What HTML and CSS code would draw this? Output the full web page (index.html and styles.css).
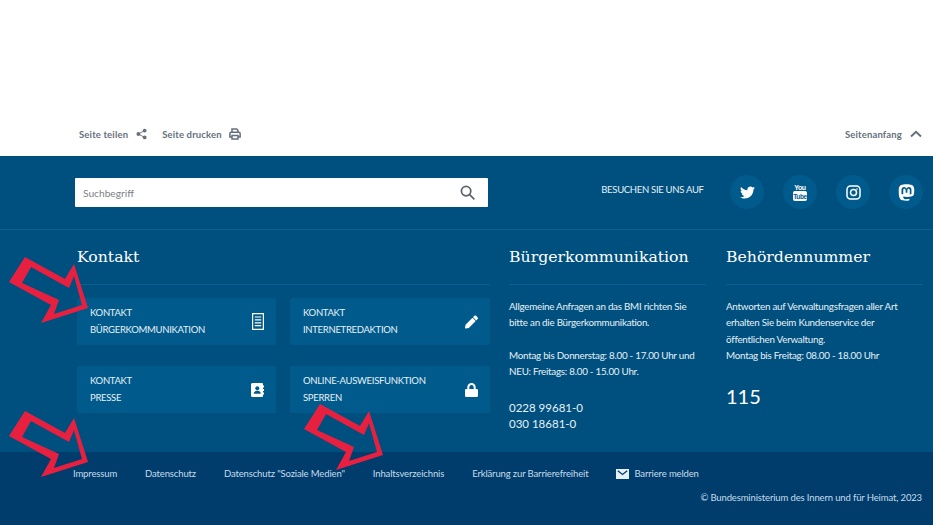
FILE: index.html
```html
<!DOCTYPE html>
<html lang="de">
<head>
    <meta charset="UTF-8">
    <meta name="viewport" content="width=device-width, initial-scale=1.0">
    <title>Bundesministerium des Innern und für Heimat</title>
    <link rel="stylesheet" href="styles.css">
</head>
<body>
    <!-- Page tools -->
    <div class="tools">
        <a class="tool">Seite teilen
            <svg class="tool-icon" viewBox="0 0 14 14"><circle cx="11" cy="2.6" r="2.4"/><circle cx="3" cy="7" r="2.4"/><circle cx="11" cy="11.4" r="2.4"/><path class="thin" d="M11 2.6 3 7l8 4.4"/></svg>
        </a>
        <a class="tool tool-print">Seite drucken
            <svg class="tool-icon print" viewBox="0 0 14 14"><path class="outline" d="M3.5 5V1.2h5.4L10.5 3v2M3.5 10.5H1V6.6C1 5.7 1.6 5 2.5 5h9c.9 0 1.5.7 1.5 1.6v3.9h-2.500M3.500 8.800h7v4h-7z"/></svg>
        </a>
        <a class="tool tool-top">Seitenanfang
            <svg class="chevron" viewBox="0 0 12 8"><path d="M1 6.500 6 1.800l5 4.700"/></svg>
        </a>
    </div>

    <footer class="footer">
        <div class="search-row">
            <div class="search">
                <span>Suchbegriff</span>
                <svg class="search-icon" viewBox="0 0 16 16"><circle cx="6.500" cy="6.500" r="5"/><path d="m10.300 10.300 5 5"/></svg>
            </div>
            <span class="visit">BESUCHEN SIE UNS AUF</span>
            <div class="social">
                <a class="circle"><svg class="twitter" viewBox="0 0 512 512"><path d="M459.37 151.716c.325 4.548.325 9.097.325 13.645 0 138.72-105.583 298.558-298.558 298.558-59.452 0-114.68-17.219-161.137-47.106 8.447.974 16.568 1.299 25.34 1.299 49.055 0 94.213-16.568 130.274-44.832-46.132-.975-84.792-31.188-98.112-72.772 6.498.974 12.995 1.624 19.818 1.624 9.421 0 18.843-1.3 27.614-3.573-48.081-9.747-84.143-51.98-84.143-102.985v-1.299c13.969 7.797 30.214 12.67 47.431 13.319-28.264-18.843-46.781-51.005-46.781-87.391 0-19.492 5.197-37.36 14.294-52.954 51.655 63.675 129.3 105.258 216.365 109.807-1.624-7.797-2.599-15.918-2.599-24.04 0-57.828 46.782-104.934 104.934-104.934 30.213 0 57.502 12.67 76.67 33.137 23.715-4.548 46.456-13.32 66.599-25.34-7.798 24.366-24.366 44.833-46.132 57.827 21.117-2.273 41.584-8.122 60.426-16.243-14.292 20.791-32.161 39.308-52.628 54.253z"/></svg></a>
                <a class="circle"><svg class="youtube" viewBox="0 0 14 17"><text class="yt-you" x="7" y="6.200">You</text><rect y="7" width="14" height="10" rx="2"/><text class="yt-tube" x="7" y="15.200">Tube</text></svg></a>
                <a class="circle"><svg class="instagram" viewBox="0 0 15 15"><rect x="1" y="1" width="13" height="13" rx="3.500"/><circle cx="7.500" cy="7.500" r="3"/><circle class="dot" cx="11" cy="4" r=".8"/></svg></a>
                <a class="circle"><svg class="mastodon" viewBox="0 0 448 512"><path d="M433 179.11c0-97.2-63.71-125.7-63.71-125.7-62.52-28.7-228.56-28.4-290.48 0 0 0-63.72 28.5-63.72 125.7 0 115.7-6.6 259.4 105.63 289.1 40.51 10.7 75.32 13 103.33 11.4 50.81-2.8 79.32-18.1 79.32-18.1l-1.7-36.9s-36.31 11.4-77.12 10.1c-40.41-1.4-83-4.4-89.63-54a102.54 102.54 0 0 1-.9-13.9c85.63 20.9 158.65 9.1 178.75 6.7 56.12-6.7 105-41.3 111.23-72.9 9.8-49.8 9-121.5 9-121.5zm-75.12 125.2h-46.63v-114.2c0-49.7-64-51.6-64 6.9v62.5h-46.33V197c0-58.5-64-56.6-64-6.9v114.2H90.19c0-122.1-5.2-147.9 18.41-175 25.9-28.9 79.82-30.8 103.83 6.1l11.6 19.5 11.6-19.5c24.11-37.1 78.12-34.8 103.83-6.1 23.71 27.3 18.4 53 18.4 175z"/></svg></a>
            </div>
        </div>

        <div class="contact-row">
            <section class="col col-wide">
                <h2>Kontakt</h2>
                <div class="cards">
                    <a class="card"><span>KONTAKT<br>BÜRGERKOMMUNIKATION</span>
                        <svg class="card-icon doc-icon" viewBox="0 0 12 17"><path class="doc" d="M.6.600h10.800v15.800H.6zM2.800 4h6.400M2.800 6.900h6.400M2.800 9.800h6.400M2.800 12.700h6.400"/></svg>
                    </a>
                    <a class="card"><span>KONTAKT<br>INTERNETREDAKTION</span>
                        <svg class="card-icon" viewBox="0 0 512 512"><path d="M497.9 142.1l-46.1 46.1c-4.7 4.7-12.3 4.700-17 0l-111-111c-4.700-4.700-4.700-12.300 0-17l46.100-46.100c18.700-18.700 49.100-18.700 67.900 0l60.100 60.100c18.800 18.700 18.800 49.100 0 67.900zM284.200 99.800L21.600 362.400.4 483.900c-2.900 16.400 11.400 30.600 27.800 27.800l121.500-21.300 262.600-262.600c4.700-4.700 4.700-12.300 0-17l-111-111c-4.800-4.700-12.400-4.700-17.100 0z"/></svg>
                    </a>
                    <a class="card"><span>KONTAKT<br>PRESSE</span>
                        <svg class="card-icon" viewBox="0 0 13 14"><path d="M1.500 0H11a1 1 0 0 1 1 1v1.500h1v2h-1v1.500h1v2h-1v1.500h1v2h-1V13a1 1 0 0 1-1 1H1.500A1.500 1.500 0 0 1 0 12.500v-11A1.500 1.500 0 0 1 1.500 0z"/><circle class="cut" cx="6.300" cy="5.200" r="2"/><path class="cut" d="M2.800 10.800c0-2 1.500-3 3.500-3s3.500 1 3.500 3z"/></svg>
                    </a>
                    <a class="card"><span>ONLINE-AUSWEISFUNKTION<br>SPERREN</span>
                        <svg class="card-icon" viewBox="0 0 13 14"><path class="shackle" d="M3.300 6.500V4.200a3.200 3.200 0 0 1 6.400 0v2.300"/><rect y="6" width="13" height="8" rx="1.200"/></svg>
                    </a>
                </div>
            </section>
            <section class="col">
                <h2>Bürgerkommunikation</h2>
                <p class="col-text">Allgemeine Anfragen an das BMI richten Sie bitte an die Bürgerkommunikation.</p>
                <p class="col-text">Montag bis Donnerstag: 8.00 - 17.00 Uhr und NEU: Freitags: 8.00 - 15.00 Uhr.</p>
                <p class="phone">0228 99681-0<br>030 18681-0</p>
            </section>
            <section class="col">
                <h2>Behördennummer</h2>
                <p class="col-text">Antworten auf Verwaltungsfragen aller Art erhalten Sie beim Kundenservice der öffentlichen Verwaltung.<br>Montag bis Freitag: 08.00 - 18.00 Uhr</p>
                <p class="big-number">115</p>
            </section>
        </div>

        <div class="legal">
            <nav class="legal-links">
                <a>Impressum</a>
                <a>Datenschutz</a>
                <a>Datenschutz "Soziale Medien"</a>
                <a>Inhaltsverzeichnis</a>
                <a>Erklärung zur Barrierefreiheit</a>
                <a class="mail-link">
                    <svg class="mail" viewBox="0 0 13 10"><path class="mail-box" d="M0 0h13v10H0z"/><path class="mail-flap" d="m1.800 1.800 4.700 3.700 4.700-3.700"/></svg>
                    Barriere melden
                </a>
            </nav>
            <p class="copyright">© Bundesministerium des Innern und für Heimat, 2023</p>
        </div>
    </footer>

    <!-- Red annotation arrows drawn on top of the screenshot -->
    <svg class="arrow arrow-one" viewBox="0 0 100 75"><path d="M25 3 65 25 74 10 88 54 41 69 51 51 9 28zM31 13 22 29 59 46 54 60 82 51 74 22 69 34z"/></svg>
    <svg class="arrow arrow-two" viewBox="0 0 100 75"><path d="M25 3 65 25 74 10 88 54 41 69 51 51 9 28zM31 13 22 29 59 46 54 60 82 51 74 22 69 34z"/></svg>
    <svg class="arrow arrow-three" viewBox="0 0 100 75"><path d="M25 3 65 25 74 10 88 54 41 69 51 51 9 28zM31 13 22 29 59 46 54 60 82 51 74 22 69 34z"/></svg>
</body>
</html>
```

FILE: styles.css
```css
body {
    margin: 0;
    font-family: Lato, "Noto Sans", sans-serif;
    font-size: 10px;
    background: #fff;
    overflow: hidden;
}
a {
    color: inherit;
    text-decoration: none;
}
p {
    margin: 0;
}

/* page tools */
.tools {
    display: flex;
    align-items: center;
    gap: 15px;
    height: 156px;
    box-sizing: border-box;
    padding: 112px 11px 0 79px;
    color: #66707c;
    font-size: 9.5px;
    font-weight: 700;
    letter-spacing: .15px;
}
.tool {
    display: flex;
    align-items: center;
    gap: 8px;
}
.tool-print {
    gap: 7px;
}
.tool-top {
    margin-left: auto;
}
.tool-icon {
    width: 11px;
    height: 12px;
    fill: #66707c;
}
.tool-icon.print {
    width: 12px;
    height: 12px;
}
.thin {
    fill: none;
    stroke: #66707c;
    stroke-width: 1.2;
}
.outline {
    fill: none;
    stroke: #66707c;
    stroke-width: 1.8;
}
.chevron {
    width: 12px;
    height: 8px;
    fill: none;
    stroke: #66707c;
    stroke-width: 2;
}

/* footer */
.footer {
    background: #00507f;
    color: #e6f1f7;
}
.search-row {
    display: flex;
    align-items: flex-start;
    height: 74px;
    box-sizing: border-box;
    padding: 19px 10px 0 75px;
    border-bottom: 1px solid #0c5f90;
}
.search {
    display: flex;
    align-items: center;
    justify-content: space-between;
    width: 414px;
    height: 29px;
    margin-top: 3px;
    box-sizing: border-box;
    padding: 0 13px 0 8px;
    background: #fff;
    border-radius: 1px;
    color: #7b8087;
    font-size: 10.2px;
}
.search-icon {
    width: 15px;
    height: 15px;
    fill: none;
    stroke: #5d6670;
    stroke-width: 1.9;
}
.visit {
    width: 129px;
    margin: 8px 0 0 113px;
    font-size: 9.5px;
    letter-spacing: -.3px;
    line-height: 14px;
}
.social {
    display: flex;
    gap: 19px;
}
.circle {
    display: flex;
    align-items: center;
    justify-content: center;
    width: 34px;
    height: 34px;
    border-radius: 50%;
    background: #005b8c;
}
.twitter {
    width: 15px;
    height: 15px;
    fill: #fff;
}
.youtube {
    width: 14px;
    height: 17px;
    fill: #fff;
}
.yt-you,
.yt-tube {
    font-family: "Liberation Sans", sans-serif;
    font-size: 7px;
    font-weight: 700;
    letter-spacing: -.4px;
    text-anchor: middle;
}
.yt-tube {
    font-size: 6.5px;
    fill: #005b8c;
}
.instagram {
    width: 15px;
    height: 15px;
    fill: none;
    stroke: #fff;
    stroke-width: 1.5;
}
.instagram .dot {
    fill: #fff;
    stroke: none;
}
.mastodon {
    width: 17px;
    height: 19px;
    fill: #fff;
}

/* contact columns */
.contact-row {
    display: flex;
    gap: 19px;
    height: 222px;
    box-sizing: border-box;
    padding: 0 10px 0 77px;
}
.col {
    width: 197px;
}
.col:last-child {
    margin-left: 1px;
}
.col-wide {
    width: 413px;
}
h2 {
    margin: 0 0 13px;
    padding: 17px 0;
    border-bottom: 1px solid #0c5f90;
    color: #fff;
    font-family: "DejaVu Serif", serif;
    font-size: 15.7px;
    font-weight: 400;
    line-height: 20px;
}
.cards {
    display: grid;
    grid-template-columns: 199px 200px;
    grid-auto-rows: 47px;
    gap: 21px 14px;
}
.card {
    display: flex;
    align-items: center;
    justify-content: space-between;
    padding: 0 12px 0 13px;
    background: #005b8c;
    border-radius: 2px;
    font-size: 9.5px;
    letter-spacing: -.3px;
    line-height: 16.3px;
}
.card-icon {
    width: 13px;
    height: 16px;
    fill: #fff;
}
.doc-icon {
    width: 12px;
    height: 17px;
}
.doc {
    fill: none;
    stroke: #fff;
    stroke-width: 1.2;
}
.cut {
    fill: #005b8c;
}
.shackle {
    fill: none;
    stroke: #fff;
    stroke-width: 2;
}
.col-text {
    margin-bottom: 16.3px;
    font-size: 9.8px;
    letter-spacing: -.25px;
    line-height: 16.3px;
}
.phone {
    margin-top: 21px;
    font-size: 11.5px;
    line-height: 16px;
}
.big-number {
    margin-top: 20px;
    color: #fff;
    font-size: 20px;
    line-height: 26px;
}

/* legal strip */
.legal {
    height: 73px;
    box-sizing: border-box;
    padding: 15px 11px 0 73px;
    background: #003d6d;
    color: #c5dcea;
    font-size: 9.5px;
    letter-spacing: -.14px;
}
.legal-links {
    display: flex;
    gap: 28px;
    line-height: 14px;
}
.mail-link {
    display: flex;
    align-items: center;
    gap: 5px;
}
.mail {
    width: 13px;
    height: 10px;
}
.mail-box {
    fill: #e6f1f7;
}
.mail-flap {
    fill: none;
    stroke: #003d6d;
    stroke-width: 1.3;
}
.copyright {
    margin-top: 10px;
    line-height: 14px;
    text-align: right;
}

/* annotation arrows */
.arrow {
    position: absolute;
    left: 0;
    width: 100px;
    height: 75px;
    fill: #e8203f;
    fill-rule: evenodd;
}
.arrow-one {
    top: 254px;
}
.arrow-two {
    top: 408px;
}
.arrow-three {
    top: 401px;
    left: 295px;
}
```
